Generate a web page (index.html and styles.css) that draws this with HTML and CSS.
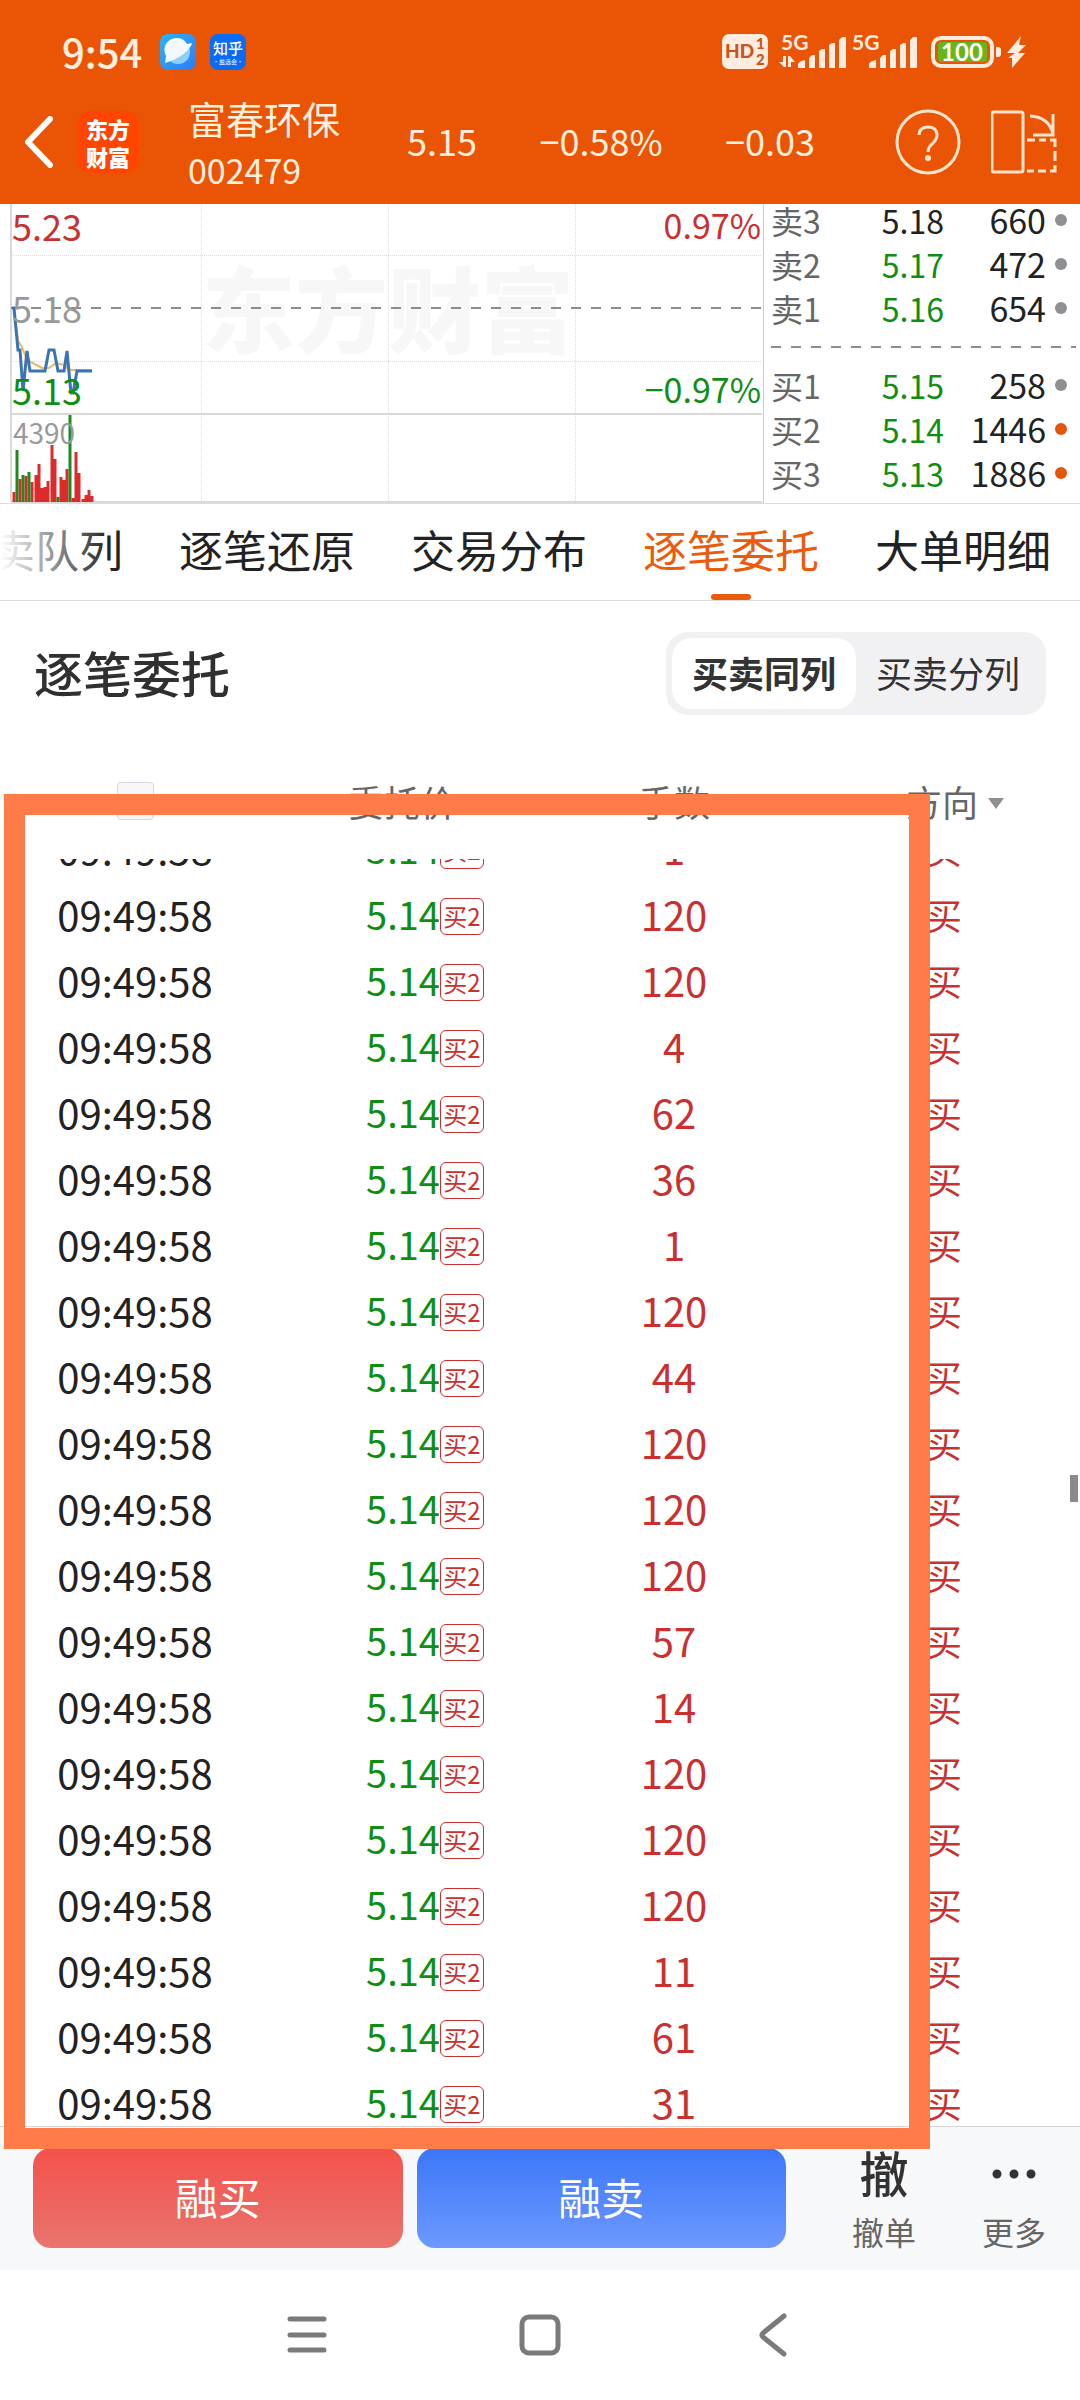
FILE: index.html
```html
<!DOCTYPE html>
<html lang="zh-CN">
<head>
<meta charset="utf-8">
<meta name="viewport" content="width=device-width, initial-scale=1">
<title>富春环保 002479</title>
<link rel="stylesheet" href="styles.css">
</head>
<body>
<header class="top">
  <div class="status">
    <span class="clock">9:54</span>
    <svg class="app-icon" viewBox="0 0 36 36" aria-hidden="true">
      <defs><linearGradient id="sky" x1="0" y1="0" x2="1" y2="1"><stop offset="0" stop-color="#2bb3f8"/><stop offset="1" stop-color="#2f7bf6"/></linearGradient></defs>
      <rect width="36" height="36" rx="8" fill="url(#sky)"/>
      <circle cx="18" cy="18" r="12" fill="#8fd0fb"/>
      <path d="M6 22A12 12 0 0 1 27 10L32 9C31 15 20 25 5 29Z" fill="#f2faff"/>
    </svg>
    <span class="zhihu"><b>知乎</b><i>·盐选会·</i></span>
    <span class="spacer"></span>
    <svg class="signals" viewBox="0 0 306 38" aria-hidden="true">
      <rect x="0" y="1" width="46" height="35" rx="7" fill="#ffece0"/>
      <g class="hd"><text x="3" y="25" font-size="19">HD</text><text x="34" y="16" font-size="15">1</text><text x="34" y="32" font-size="15">2</text></g>
      <g class="net"><text x="59" y="17" font-size="21">5G</text><text x="130" y="17" font-size="21">5G</text></g>
      <g fill="#ffece0">
        <path d="M57 29H61V23H64V34H62ZM66 34V23H68L73 29H69V34Z"/>
        <path d="M76 35V31Q77 28 83 27V35ZM87 35V25L90 22H93V35ZM97 35V18L100 16H103V35ZM107 35V12L110 10H113V35ZM117 35V7L120 4H124V35Z"/>
        <path d="M147 35V31Q148 28 154 27V35ZM158 35V25L161 22H164V35ZM168 35V18L171 16H174V35ZM178 35V12L181 10H184V35ZM188 35V7L191 4H195V35Z"/>
        <path d="M274 14H276Q279 14 279 17V21Q279 24 276 24H274ZM299 3L285 20H293L286 25L290 25L290 35L303 20H296L304 12H297Z"/>
      </g>
      <rect x="211" y="5" width="59" height="28" rx="8" fill="none" stroke="#ffece0" stroke-width="4"/>
      <rect x="216" y="9" width="49" height="20" rx="3" fill="#67b51b"/>
      <text class="charge" x="240" y="28" font-size="24">100</text>
    </svg>
  </div>
  <div class="quote">
    <a class="back" href="#" aria-label="返回"><svg viewBox="0 0 30 52"><path d="M26 3L4 26L26 49"/></svg></a>
    <span class="logo"><span>东方</span><span>财富</span></span>
    <div class="stock"><strong>富春环保</strong><span>002479</span></div>
    <div class="figures"><span>5.15</span><span>−0.58%</span><span>−0.03</span></div>
    <button class="icon-btn" aria-label="帮助"><svg viewBox="0 0 66 66"><circle cx="33" cy="33" r="31"/><path d="M24 26Q24 18 33 18T42 26Q42 31 36 36Q33 39 33 43"/><circle class="dot" cx="33" cy="49" r="3"/></svg></button>
    <button class="icon-btn" aria-label="横屏"><svg viewBox="0 0 66 66"><rect x="1" y="3" width="31" height="60" rx="2"/><path d="M39 7Q58 8 62 25M62 5V26H42M36 31H44M48 31H55M59 31H64V38M64 42V52M64 56V62H59M55 62H47M43 62H36"/></svg></button>
  </div>
</header>

<section class="market">
  <div class="chart">
    <svg viewBox="0 0 764 299" aria-hidden="true">
      <text class="mark" x="202" y="142">东方财富</text>
      <path class="grid" d="M12 51H762M12 157H762M201 0V298M388 0V298M575 0V298"/>
      <path class="frame" d="M11 0V298M11 210H762M11 298H762"/>
      <path class="edge" d="M763 0V299"/>
      <path class="mid" d="M11 104H762"/>
      <path class="avg" d="M14 106L18 137L22 143L27 156L42 164H49L56 159L64 161L69 166H92"/>
      <path class="line" d="M12 104H14L18 146H20L23 187L27 147L30 167H45L49 146H54L58 167H64L67 147L71 189H73L77 167H92"/>
      <path class="up" d="M14 298V288M20 298V275M26 298V272M32 298V278M36 298V271M39 298V260M42 298V284M45 298V283M48 298V277M52 298V241M55 298V255M61 298V273M64 298V276M67 298V265M73 298V294M76 298V248M79 298V269M83 298V295M86 298V291M89 298V286M92 298V292"/>
      <path class="down" d="M17 298V246M23 298V271M29 298V268M58 298V293M70 298V211"/>
    </svg>
    <span class="tag t1 red">5.23</span>
    <span class="tag t2">5.18</span>
    <span class="tag t3 green">5.13</span>
    <span class="tag t4">4390</span>
    <span class="tag r1 red">0.97%</span>
    <span class="tag r3 green">−0.97%</span>
  </div>
  <div class="book">
    <table>
      <tr><th>卖3</th><td>5.18</td><td>660</td><td><i></i></td></tr>
      <tr><th>卖2</th><td class="green">5.17</td><td>472</td><td><i></i></td></tr>
      <tr><th>卖1</th><td class="green">5.16</td><td>654</td><td><i></i></td></tr>
    </table>
    <svg class="rule" height="2" width="100%" aria-hidden="true"><path d="M0 1H2000"/></svg>
    <table>
      <tr><th>买1</th><td class="green">5.15</td><td>258</td><td><i></i></td></tr>
      <tr><th>买2</th><td class="green">5.14</td><td>1446</td><td><i class="hot"></i></td></tr>
      <tr><th>买3</th><td class="green">5.13</td><td>1886</td><td><i class="hot"></i></td></tr>
    </table>
  </div>
</section>

<nav class="tabs">
  <a href="#">买卖队列</a><a href="#">逐笔还原</a><a href="#">交易分布</a><a href="#" class="on">逐笔委托</a><a href="#">大单明细</a>
</nav>

<div class="heading">
  <h1>逐笔委托</h1>
  <div class="segment"><button class="on">买卖同列</button><button>买卖分列</button></div>
</div>

<main class="orders">
  <div class="cols head">
    <span class="c-time"><i class="cal"></i></span><span class="c-price">委托价</span><span class="c-lots">手数</span><span class="c-side">方向<i class="caret"></i></span>
  </div>
  <div class="list">
    <table>
      <tbody id="rows"></tbody>
    </table>
  </div>
  <div class="highlight"></div>
  <div class="thumb"></div>
</main>

<footer class="actions">
  <button class="buy">融买</button>
  <button class="sell">融卖</button>
  <a href="#" class="act"><b>撤</b><span>撤单</span></a>
  <a href="#" class="act"><svg viewBox="0 0 48 48" aria-hidden="true"><path d="M7 24h.01M24 24h.01M41 24h.01"/></svg><span>更多</span></a>
</footer>

<nav class="sys">
  <button aria-label="菜单"><svg viewBox="0 0 44 44"><path d="M5 6H39M5 22H39M5 37H39"/></svg></button>
  <button aria-label="主页"><svg viewBox="0 0 44 44"><rect x="4" y="4" width="36" height="36" rx="7"/></svg></button>
  <button aria-label="返回"><svg viewBox="0 0 44 44"><path d="M33 3L12 20Q10 22 12 24L33 41"/></svg></button>
</nav>
<script src="app.js"></script>
</body>
</html>
```
FILE: app.js
```js
const lots = [1, 120, 120, 4, 62, 36, 1, 120, 44, 120, 120, 120, 57, 14, 120, 120, 120, 11, 61, 31];
document.getElementById('rows').innerHTML = lots.map(n =>
  `<tr class="cols"><td class="c-time">09:49:58</td><td class="c-price green"><span>5.14</span><em>买2</em></td><td class="c-lots red">${n}</td><td class="c-side red">买</td></tr>`
).join('');
```
FILE: styles.css
```css
* { box-sizing: border-box; }
body {
  margin: 0;
  background: #fff;
  color: #222;
  font-family: "Noto Sans CJK SC", sans-serif;
  font-size: 36px;
  line-height: 44px;
}
button { border: 0; padding: 0; background: none; font: inherit; color: inherit; }
a { color: inherit; text-decoration: none; }
svg { display: block; }
i, em { font-style: normal; }
.red { color: #c9302f; }
.green { color: #0f8e14; }

/* header */
.top { height: 204px; background: #e95504; color: #ffefdf; }
.status { display: flex; align-items: center; height: 80px; padding: 24px 52px 0 62px; }
.clock { width: 98px; padding-bottom: 3px; font-size: 40px; font-weight: 500; }
.app-icon { width: 36px; height: 36px; }
.zhihu {
  display: flex; flex-direction: column; align-items: center; justify-content: center;
  width: 36px; height: 36px; margin-left: 14px; border-radius: 8px;
  background: #0a6cf5; color: #fff;
}
.zhihu b { font-size: 15px; line-height: 20px; font-weight: 500; }
.zhihu i { font-size: 6px; line-height: 8px; }
.spacer { flex: 1; }
.signals { width: 306px; height: 38px; font-family: Lato, sans-serif; font-weight: 900; }
.hd { fill: #c9541d; }
.net { fill: #ffece0; font-weight: 700; }
.charge { fill: #fff; font-weight: 700; text-anchor: middle; }
.quote { display: flex; align-items: center; height: 124px; padding: 0 23px 0 24px; }
.back svg { width: 30px; height: 52px; fill: none; stroke: #fff; stroke-width: 6; stroke-linecap: round; stroke-linejoin: round; }
.logo {
  display: flex; flex-direction: column; align-items: center; justify-content: center;
  width: 62px; height: 62px; margin-left: 23px; border-radius: 14px;
  background: #ff4500; color: #fff;
  font-size: 22px; line-height: 28px; font-weight: 900;
}
.stock { display: flex; flex-direction: column; width: 219px; margin-left: 49px; font-size: 34px; }
.stock strong { height: 56px; font-size: 38px; line-height: 52px; font-weight: 400; }
.figures { flex: 1; display: flex; justify-content: space-between; padding: 0 80px 4px 0; }
.icon-btn { width: 66px; height: 66px; margin-right: 30px; }
.icon-btn + .icon-btn { margin-right: 0; }
.icon-btn svg { fill: none; stroke: #ffe3cb; stroke-width: 3; }
.icon-btn .dot { fill: #ffe3cb; stroke: none; }

/* chart and order book */
.market { display: flex; border-bottom: 1px solid #ddd; }
.chart { position: relative; width: 764px; flex: none; }
.chart svg { width: 764px; height: 299px; }
.mark { font-size: 93px; font-weight: 900; fill: #f7f7f7; }
.chart path { fill: none; }
.grid, .edge { shape-rendering: crispEdges; }
.grid { stroke: #ddd; stroke-dasharray: 1 1; }
.frame { stroke: #d9d9d9; stroke-width: 2; }
.edge { stroke: #ccc; }
.mid { stroke: #8c8c8c; stroke-width: 2; stroke-dasharray: 10 10; }
.avg { stroke: #e6bb66; stroke-width: 2; }
.line { stroke: #3b74b4; stroke-width: 3; }
.up { stroke: #dd2a2a; stroke-width: 3; }
.down { stroke: #1f8a1f; stroke-width: 3; }
.tag { position: absolute; left: 12px; font-size: 36px; line-height: 40px; color: #999; }
.tag.red { color: #c9302f; }
.tag.green { color: #0f8e14; }
.t1, .r1 { top: 1px; }
.t2 { top: 83px; }
.t3, .r3 { top: 165px; }
.tag.t4 { top: 208px; left: 13px; font-size: 28px; }
.tag.r1, .tag.r3 { left: auto; right: 3px; font-size: 34px; }
.book { flex: 1; padding: 0 4px 0 7px; }
.book table { width: 100%; border-collapse: collapse; table-layout: fixed; font-size: 32px; }
.book tr { height: 44px; }
.book th, .book td { padding: 0; line-height: 44px; text-align: right; white-space: nowrap; }
.book th { width: 60px; text-align: left; font-weight: 400; color: #666; }
.book td:nth-child(2) { width: 113px; }
.book td:nth-child(3) { font-size: 34px; }
.book td:last-child { width: 30px; padding-right: 9px; }
.book i { display: inline-block; width: 12px; height: 12px; border-radius: 50%; background: #8e8e93; vertical-align: 8px; }
.book i.hot { background: #e4560a; }
.book table:first-child { margin-top: -6px; }
.rule { margin: 16px 0 15px; }
.rule path { stroke: #8c8c8c; stroke-width: 2; stroke-dasharray: 10 10; }

/* tabs */
.tabs {
  position: relative; display: flex; justify-content: flex-end; gap: 56px;
  height: 97px; padding-right: 29px; overflow: hidden;
  border-bottom: 1px solid #ddd; font-size: 44px; line-height: 90px; white-space: nowrap;
}
.tabs a { flex: none; position: relative; }
.tabs .on { color: #ea5b0c; }
.tabs .on::after {
  content: ""; position: absolute; left: 50%; bottom: 0; width: 40px; height: 6px;
  margin-left: -20px; border-radius: 3px; background: #ea5b0c;
}
.tabs::before {
  content: ""; position: absolute; z-index: 1; left: 0; top: 0; width: 110px; height: 94px;
  background: linear-gradient(90deg, #fff, rgba(255, 255, 255, 0));
}

/* section heading */
.heading { display: flex; align-items: center; justify-content: space-between; height: 145px; padding: 0 34px; }
.heading h1 { margin: 0; padding-bottom: 4px; font-size: 49px; font-weight: 500; color: #303030; }
.segment { display: flex; padding: 6px; border-radius: 22px; background: #f1f1f4; }
.segment button { flex: 1; height: 71px; padding: 0 20px 4px; border-radius: 20px; color: #333; white-space: nowrap; }
.segment .on { background: #fff; font-weight: 700; }

/* order list */
.orders { position: relative; padding-top: 22px; }
.cols { display: grid; grid-template-columns: 270fr 264fr 280fr 266fr; align-items: center; height: 66px; }
.head { margin-bottom: 25px; color: #666; }
.c-time { text-align: center; }
.c-lots, .c-price { text-align: center; }
.c-side { padding-left: 92px; }
.cal { display: block; width: 37px; height: 38px; margin: 0 auto; border: 1px solid #d6d8e0; border-radius: 4px; background: #f7f7fa; }
.caret { display: inline-block; margin-left: 10px; border: 8px solid transparent; border-top: 11px solid #8e8e93; border-bottom: 0; vertical-align: 8px; }
.list { display: flex; align-items: flex-end; height: 1267px; overflow: hidden; }
.list table { display: block; width: 100%; margin-bottom: -11px; border-collapse: collapse; font-size: 40px; }
.list tbody { display: block; }
.list td { padding: 0 0 4px; }
.list td.c-price { display: flex; align-items: center; justify-content: center; padding: 0 0 0 46px; font-size: 38px; }
.list .c-price span { padding-bottom: 4px; }
.list em { width: 44px; height: 37px; border: 1px solid #c9302f; border-radius: 6px; color: #c9302f; font-size: 24px; line-height: 34px; text-align: center; }
.list td.c-side { padding-left: 112px; font-size: 36px; }
.highlight { position: absolute; left: 4px; right: 150px; top: 48px; bottom: -23px; border: 21px solid #ff7b47; }
.thumb { position: absolute; right: 2px; top: 729px; width: 8px; height: 27px; background: #8a8a8a; }

/* bottom actions */
.actions { display: flex; gap: 14px; height: 144px; padding: 21px 34px 0 33px; border-top: 1px solid #d5d7da; background: #f7f8fa; }
.buy, .sell { flex: 1; height: 100px; padding-bottom: 4px; border-radius: 18px; color: #fff; font-size: 43px; }
.buy { background: linear-gradient(#f4514b, #e9746e); }
.sell { background: linear-gradient(#3b76f8, #6d99ff); }
.act { display: flex; flex-direction: column; align-items: center; width: 64px; margin-left: 52px; color: #666; font-size: 32px; line-height: 40px; white-space: nowrap; }
.act b { height: 63px; font-size: 49px; line-height: 48px; font-weight: 500; color: #333; }
.act svg { width: 48px; height: 48px; margin: 2px 0 13px; stroke: #333; stroke-width: 9; stroke-linecap: round; }

/* system navigation */
.sys { display: flex; align-items: center; justify-content: center; gap: 189px; height: 130px; }
.sys svg { width: 44px; height: 44px; fill: none; stroke: #7a7a7a; stroke-width: 5; stroke-linecap: round; }
```
